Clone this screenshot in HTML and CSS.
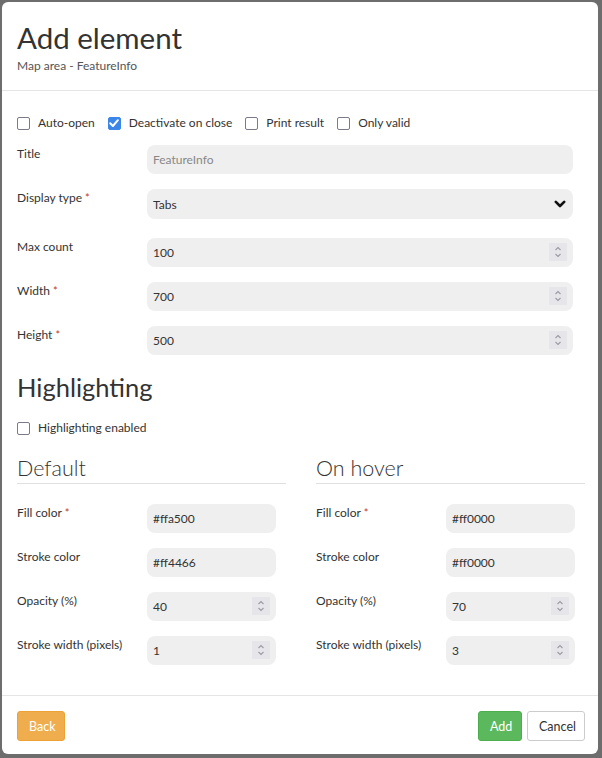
FILE: index.html
```html
<!DOCTYPE html>
<html lang="en">
<head>
<meta charset="utf-8">
<title>Add element</title>
<link rel="stylesheet" href="styles.css">
</head>
<body>
<div class="modal">
  <div class="modal-header">
    <h1 class="modal-title">Add element</h1>
    <div class="modal-sub">Map area - FeatureInfo</div>
  </div>
  <div class="modal-body">
    <div class="check-row">
      <label class="check"><span class="cb"></span>Auto-open</label>
      <label class="check"><span class="cb checked"><svg viewBox="0 0 14 14" width="14" height="14"><path d="M3.2 7.3 L5.9 10 L10.9 4.2" fill="none" stroke="#fff" stroke-width="2" stroke-linecap="round" stroke-linejoin="round"/></svg></span>Deactivate on close</label>
      <label class="check"><span class="cb"></span>Print result</label>
      <label class="check"><span class="cb"></span>Only valid</label>
    </div>

    <div class="form-row">
      <label class="form-label">Title</label>
      <div class="field"><input class="input muted" type="text" value="FeatureInfo" readonly></div>
    </div>
    <div class="form-row select-row">
      <label class="form-label">Display type <span class="req">*</span></label>
      <div class="field">
        <div class="select-wrap">
          <select class="input select"><option>Tabs</option></select>
          <svg class="chev" viewBox="0 0 12 8" width="12" height="8"><path d="M1.8 1.8 L6 6 L10.2 1.8" fill="none" stroke="#111" stroke-width="2.6" stroke-linecap="round" stroke-linejoin="round"/></svg>
        </div>
      </div>
    </div>
    <div class="form-row">
      <label class="form-label">Max count</label>
      <div class="field"><div class="num"><input class="input" type="text" value="100" readonly><span class="spin"><svg viewBox="0 0 18 18" width="18" height="18"><path d="M6.5 7 L9 4.5 L11.5 7 M6.5 11 L9 13.5 L11.5 11" fill="none" stroke="#9a9aa4" stroke-width="1.1"/></svg></span></div></div>
    </div>
    <div class="form-row">
      <label class="form-label">Width <span class="req">*</span></label>
      <div class="field"><div class="num"><input class="input" type="text" value="700" readonly><span class="spin"><svg viewBox="0 0 18 18" width="18" height="18"><path d="M6.5 7 L9 4.5 L11.5 7 M6.5 11 L9 13.5 L11.5 11" fill="none" stroke="#9a9aa4" stroke-width="1.1"/></svg></span></div></div>
    </div>
    <div class="form-row">
      <label class="form-label">Height <span class="req">*</span></label>
      <div class="field"><div class="num"><input class="input" type="text" value="500" readonly><span class="spin"><svg viewBox="0 0 18 18" width="18" height="18"><path d="M6.5 7 L9 4.5 L11.5 7 M6.5 11 L9 13.5 L11.5 11" fill="none" stroke="#9a9aa4" stroke-width="1.1"/></svg></span></div></div>
    </div>

    <h2 class="section-title">Highlighting</h2>
    <div class="check-row single">
      <label class="check"><span class="cb"></span>Highlighting enabled</label>
    </div>

    <div class="columns">
      <div class="col">
        <h3 class="col-title">Default</h3>
        <div class="form-row">
          <label class="form-label">Fill color <span class="req">*</span></label>
          <div class="field"><input class="input" type="text" value="#ffa500" readonly></div>
        </div>
        <div class="form-row">
          <label class="form-label">Stroke color</label>
          <div class="field"><input class="input" type="text" value="#ff4466" readonly></div>
        </div>
        <div class="form-row">
          <label class="form-label">Opacity (%)</label>
          <div class="field"><div class="num"><input class="input" type="text" value="40" readonly><span class="spin"><svg viewBox="0 0 18 18" width="18" height="18"><path d="M6.5 7 L9 4.5 L11.5 7 M6.5 11 L9 13.5 L11.5 11" fill="none" stroke="#9a9aa4" stroke-width="1.1"/></svg></span></div></div>
        </div>
        <div class="form-row">
          <label class="form-label">Stroke width (pixels)</label>
          <div class="field"><div class="num"><input class="input" type="text" value="1" readonly><span class="spin"><svg viewBox="0 0 18 18" width="18" height="18"><path d="M6.5 7 L9 4.5 L11.5 7 M6.5 11 L9 13.5 L11.5 11" fill="none" stroke="#9a9aa4" stroke-width="1.1"/></svg></span></div></div>
        </div>
      </div>
      <div class="col">
        <h3 class="col-title">On hover</h3>
        <div class="form-row">
          <label class="form-label">Fill color <span class="req">*</span></label>
          <div class="field"><input class="input" type="text" value="#ff0000" readonly></div>
        </div>
        <div class="form-row">
          <label class="form-label">Stroke color</label>
          <div class="field"><input class="input" type="text" value="#ff0000" readonly></div>
        </div>
        <div class="form-row">
          <label class="form-label">Opacity (%)</label>
          <div class="field"><div class="num"><input class="input" type="text" value="70" readonly><span class="spin"><svg viewBox="0 0 18 18" width="18" height="18"><path d="M6.5 7 L9 4.5 L11.5 7 M6.5 11 L9 13.5 L11.5 11" fill="none" stroke="#9a9aa4" stroke-width="1.1"/></svg></span></div></div>
        </div>
        <div class="form-row">
          <label class="form-label">Stroke width (pixels)</label>
          <div class="field"><div class="num"><input class="input" type="text" value="3" readonly><span class="spin"><svg viewBox="0 0 18 18" width="18" height="18"><path d="M6.5 7 L9 4.5 L11.5 7 M6.5 11 L9 13.5 L11.5 11" fill="none" stroke="#9a9aa4" stroke-width="1.1"/></svg></span></div></div>
        </div>
      </div>
    </div>
  </div>
  <div class="modal-footer">
    <button class="btn btn-warning" type="button">Back</button>
    <div class="footer-right">
      <button class="btn btn-success" type="button">Add</button>
      <button class="btn btn-default" type="button">Cancel</button>
    </div>
  </div>
</div>
</body>
</html>
```

FILE: styles.css
```css
* { box-sizing: border-box; }

html, body {
  margin: 0;
  padding: 0;
}

body {
  background: #6d6d6d;
  padding: 2px 4px 4px 2px;
  font-family: Lato, "Noto Sans", sans-serif;
  color: #333;
  font-size: 12px;
}

.modal {
  width: 596px;
  height: 752px;
  background: #fff;
  border-radius: 6px;
  display: flex;
  flex-direction: column;
}

.modal-header {
  padding: 19px 15px 0;
  height: 89px;
  border-bottom: 1px solid #e5e5e5;
}

.modal-title {
  margin: 0;
  font-weight: 400;
  font-size: 29.5px;
  line-height: 33px;
  color: #333;
}

.modal-sub {
  margin-top: 4px;
  font-size: 12px;
  line-height: 15px;
  color: #555;
}

.modal-body {
  flex: 1;
  padding: 24px 15px 0;
}

.check-row {
  display: flex;
  align-items: center;
  gap: 13px;
  height: 16px;
  margin-bottom: 14px;
}

.check-row.single {
  margin-bottom: 20px;
}

.check {
  display: flex;
  align-items: center;
  gap: 8px;
  font-size: 12px;
  line-height: 16px;
  color: #333;
}

.cb {
  width: 13px;
  height: 13px;
  border: 1.5px solid #7a7a88;
  border-radius: 2px;
  background: #fff;
  display: inline-flex;
  align-items: center;
  justify-content: center;
  flex: none;
}

.cb.checked {
  background: #3c86e8;
  border-color: #3c86e8;
}

.cb.checked svg { display: block; margin: -1.5px; }

.form-row {
  display: flex;
  align-items: flex-start;
  margin-bottom: 15px;
}

.select-row { margin-bottom: 19px; }

.form-label {
  width: 130px;
  flex: none;
  padding-top: 1px;
  font-size: 12px;
  line-height: 16px;
  color: #333;
}

.req { color: #c0392b; font-size: 11px; }

.field {
  flex: 1;
  padding-right: 10px;
  min-width: 0;
}

.input {
  display: block;
  width: 100%;
  height: 29px;
  border: none;
  border-radius: 8px;
  background: #efefef;
  padding: 0 6px;
  font-family: inherit;
  font-size: 12px;
  color: #333;
  outline: none;
}

.input.muted { color: #888; }

.select-wrap { position: relative; }

.select {
  -webkit-appearance: none;
  appearance: none;
  height: 30px;
}

.chev {
  position: absolute;
  right: 7px;
  top: 11px;
  pointer-events: none;
}

.num { position: relative; }

.spin {
  position: absolute;
  right: 6px;
  top: 5px;
  width: 18px;
  height: 18px;
  background: #e6e6ea;
  display: block;
}

.spin svg { display: block; }

.section-title {
  margin: 17px 0 18px;
  font-weight: 400;
  font-size: 25.5px;
  line-height: 30px;
  color: #333;
}

.columns {
  display: grid;
  grid-template-columns: 269px 269px;
  column-gap: 30px;
}

.col-title {
  margin: 0 0 20px;
  font-weight: 300;
  font-size: 21.5px;
  line-height: 24px;
  padding-bottom: 3px;
  border-bottom: 1px solid #e0e0e0;
  color: #333;
}

.modal-footer {
  border-top: 1px solid #e5e5e5;
  padding: 15px 13px 13px 15px;
  display: flex;
  justify-content: space-between;
  align-items: center;
}

.footer-right {
  display: flex;
  gap: 5px;
}

.btn {
  height: 30px;
  border-radius: 3px;
  font-family: inherit;
  font-size: 12.5px;
  padding: 0 11px;
  border: 1px solid transparent;
  cursor: pointer;
}

.btn-warning {
  background: #f0ad4e;
  border-color: #eea236;
  color: #fff;
  width: 48px;
}

.btn-success {
  background: #5cb85c;
  border-color: #4cae4c;
  color: #fff;
  width: 44px;
}

.btn-default {
  background: #fff;
  border-color: #ccc;
  color: #333;
  width: 58px;
}
```
